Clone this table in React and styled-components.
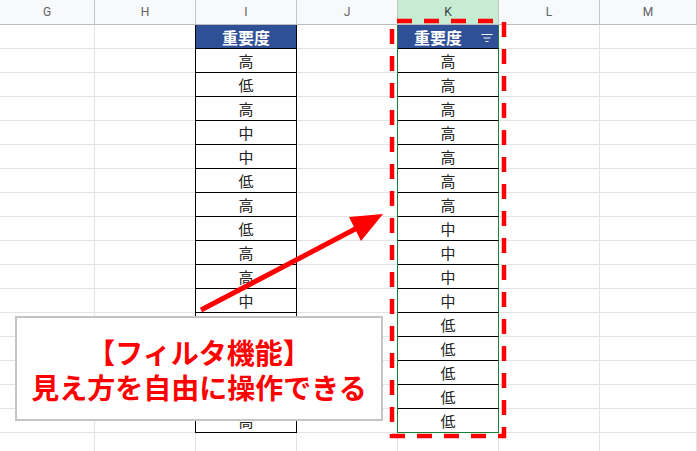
import React from "react";
import styled, { createGlobalStyle } from "styled-components";

const Global = createGlobalStyle`
  html, body { margin: 0; padding: 0; background: #fff; }
  body { width: 697px; height: 451px; overflow: hidden; }
`;

const Page = styled.div`
  position: relative;
  width: 697px;
  height: 451px;
  overflow: hidden;
  font-family: "Noto Sans CJK JP", "Noto Sans", sans-serif;
`;

const Sheet = styled.div`
  display: grid;
  grid-template-columns: 95px 101px 101px 101px 101px 101px 97px;
  grid-template-rows: 25px;
  grid-auto-rows: 24px;
`;

const ColHead = styled.div`
  box-sizing: border-box;
  display: flex;
  align-items: center;
  justify-content: center;
  background: ${(p) => (p.$active ? "#c6ecd3" : "#f8f9fa")};
  border-right: 1px solid #c4c7c5;
  border-bottom: 1px solid #bcbcbc;
  color: ${(p) => (p.$active ? "#3c4043" : "#5f6368")};
  font-family: Roboto, "Liberation Sans", sans-serif;
  font-size: 12px;
`;

const Cell = styled.div`
  box-sizing: border-box;
  border-right: 1px solid #e2e3e3;
  border-bottom: 1px solid #e2e3e3;
  background: #fff;
`;

const DataCell = styled.div`
  box-sizing: border-box;
  display: flex;
  align-items: center;
  justify-content: center;
  position: relative;
  background: ${(p) => (p.$head ? "#2f5096" : "#fff")};
  color: ${(p) => (p.$head ? "#fff" : "#222")};
  font-weight: ${(p) => (p.$head ? 700 : 400)};
  font-size: ${(p) => (p.$head ? "16px" : "15px")};
  padding-right: ${(p) => (p.$filter ? "20px" : "0")};
  border-right: 1px solid ${(p) => (p.$green ? "#188038" : "#000")};
  border-bottom: 1px solid ${(p) => (p.$green && p.$last ? "#188038" : "#000")};
  box-shadow: -1px 0 0 ${(p) => (p.$green ? "#188038" : "#000")};
`;

const FilterIcon = styled.svg`
  position: absolute;
  right: 5px;
  top: 8px;
`;

const Overlay = styled.svg`
  position: absolute;
  left: 0;
  top: 0;
  pointer-events: none;
`;

const Callout = styled.div`
  position: absolute;
  left: 15px;
  top: 316px;
  width: 368px;
  height: 105px;
  box-sizing: border-box;
  border: 2px solid #c4c4c4;
  background: #fff;
  display: flex;
  flex-direction: column;
  align-items: center;
  justify-content: center;
  color: #ff0000;
  font-family: "Noto Sans CJK JP", sans-serif;
  font-weight: 700;
  font-size: 28px;
  line-height: 35px;
  padding-top: 2px;
`;

const cols = ["G", "H", "I", "J", "K", "L", "M"];
// rows 13-15 of column I lie fully under the callout and show nothing
const iVals = ["高", "低", "高", "中", "中", "低", "高", "低", "高", "高", "中", "低", "", "", "", "高"];
const kVals = ["高", "高", "高", "高", "高", "高", "高", "中", "中", "中", "中", "低", "低", "低", "低", "低"];

export default function App() {
  const rows = [];
  for (let r = 0; r < 18; r++) {
    rows.push(
      <React.Fragment key={r}>
        <Cell />
        <Cell />
        {r === 0 ? (
          <DataCell $head>重要度</DataCell>
        ) : r <= 16 ? (
          <DataCell>{iVals[r - 1]}</DataCell>
        ) : (
          <Cell />
        )}
        <Cell />
        {r === 0 ? (
          <DataCell $head $green $filter>
            重要度
            <FilterIcon width="12" height="10" viewBox="0 0 12 10">
              <rect x="0.5" y="1" width="11" height="1" fill="#fff" />
              <rect x="2.5" y="4.5" width="7" height="1" fill="#fff" />
              <rect x="4.5" y="8" width="3" height="1" fill="#fff" />
            </FilterIcon>
          </DataCell>
        ) : r <= 16 ? (
          <DataCell $green $last={r === 16}>{kVals[r - 1]}</DataCell>
        ) : (
          <Cell />
        )}
        <Cell />
        <Cell />
      </React.Fragment>
    );
  }

  return (
    <Page>
      <Global />
      <Sheet>
        {cols.map((c) => (
          <ColHead key={c} $active={c === "K"}>{c}</ColHead>
        ))}
        {rows}
      </Sheet>
      <Overlay width="697" height="451" viewBox="0 0 697 451">
        <rect
          x="392"
          y="21"
          width="112"
          height="415"
          fill="none"
          stroke="#ff0000"
          strokeWidth="4.5"
          strokeDasharray="15 12"
          strokeDashoffset="-5"
        />
        <line x1="201" y1="310" x2="357" y2="228" stroke="#ff0000" strokeWidth="5" />
        <polygon points="383,214 361,241 349,217" fill="#ff0000" />
      </Overlay>
      <Callout>
        <div>【フィルタ機能】</div>
        <div>見え方を自由に操作できる</div>
      </Callout>
    </Page>
  );
}
